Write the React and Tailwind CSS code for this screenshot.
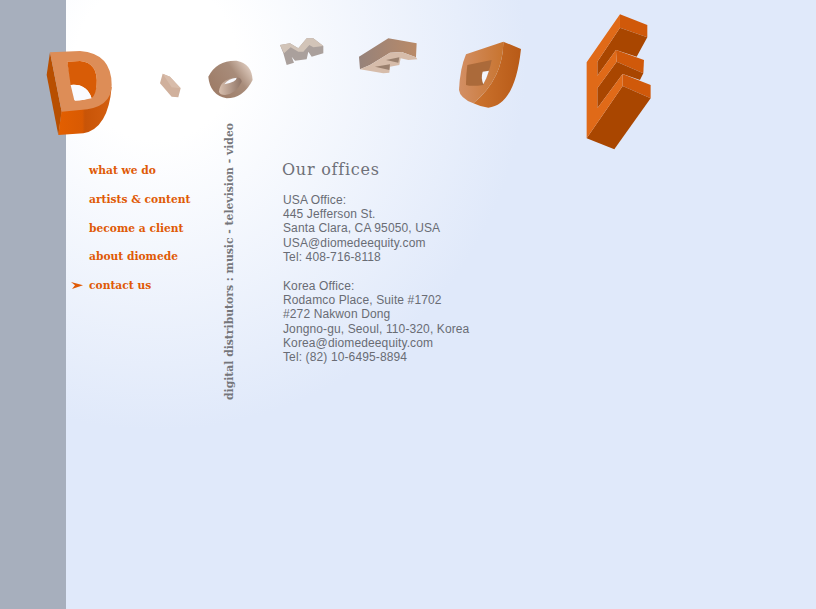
const NAV = ["what we do", "artists & content", "become a client", "about diomede", "contact us"];
const USA = ["USA Office:", "445 Jefferson St.", "Santa Clara, CA 95050, USA", "USA@diomedeequity.com", "Tel: 408-716-8118"];
const KOREA = ["Korea Office:", "Rodamco Place, Suite #1702", "#272 Nakwon Dong", "Jongno-gu, Seoul, 110-320, Korea", "Korea@diomedeequity.com", "Tel: (82) 10-6495-8894"];

function Logo() {
  return (
    <svg className="absolute left-0 top-0" width="816" height="160" viewBox="0 0 816 160">
      <defs>
        <linearGradient id="dBottom" x1="0" x2="1" y1="0" y2="0">
          <stop offset="0" stopColor="#e35f00" />
          <stop offset="0.45" stopColor="#d95a02" />
          <stop offset="0.5" stopColor="#c85407" />
          <stop offset="1" stopColor="#d45f10" />
        </linearGradient>
        <linearGradient id="oRing" x1="0" x2="1" y1="0.7" y2="0.1">
          <stop offset="0" stopColor="#9d7b66" />
          <stop offset="0.6" stopColor="#a88c7a" />
          <stop offset="1" stopColor="#ead9cd" />
        </linearGradient>
        <linearGradient id="oIn" x1="0" x2="1" y1="0" y2="0">
          <stop offset="0" stopColor="#d8bfae" />
          <stop offset="1" stopColor="#8f7466" />
        </linearGradient>
        <linearGradient id="eTop" x1="0" x2="1" y1="0" y2="0">
          <stop offset="0" stopColor="#96827a" />
          <stop offset="1" stopColor="#b98a68" />
        </linearGradient>
        <linearGradient id="d2Front" x1="0" x2="1" y1="0" y2="0">
          <stop offset="0" stopColor="#d38f64" />
          <stop offset="1" stopColor="#c8742f" />
        </linearGradient>
        <linearGradient id="d2Side" x1="0" x2="1" y1="0" y2="0">
          <stop offset="0" stopColor="#cc742f" />
          <stop offset="1" stopColor="#b85a17" />
        </linearGradient>
      </defs>

      <g transform="translate(30 30) scale(0.3333)">
        <path d="M60,67 L50,135 L85,315 L95,245 Z" fill="#b84f00" />
        <path d="M95,240 L85,315 L160,310 Q235,295 245,170 L150,238 Z" fill="url(#dBottom)" />
        <path fillRule="evenodd" d="M60,67 L150,63 Q245,70 245,165 Q245,235 150,240 L95,245 Z M112,95 L135,212 Q195,212 200,165 Q205,98 150,93 Z" fill="#dd8d57" />
        <path d="M112,95 L150,93 Q205,98 200,165 Q197,195 185,205 Q170,160 122,165 Z" fill="#d85c06" />
        <path d="M122,165 Q170,160 185,205 Q160,212 133,211 Z" fill="#fafbff" />
        <path d="M390,160 L398,131 L420,140 L452,175 L445,202 L425,200 Z" fill="#d0b09c" />
        <path d="M398,131 L420,140 L452,175 L425,172 Z" fill="#d8bcaa" />
        <path d="M535,140 Q560,90 620,92 Q665,100 668,150 Q640,205 590,205 Q540,195 535,140 Z" fill="url(#oRing)" />
        <path d="M567,185 Q570,150 615,142 Q635,142 635,155 Q620,190 585,195 Q570,195 567,185 Z" fill="url(#oIn)" />
        <path d="M583,163 Q595,145 620,143 Q620,155 583,163 Z" fill="#f8f9fe" />
      </g>

      <g transform="translate(270 10) scale(0.3333)">
        <path d="M30,105 L60,100 L85,115 L110,85 L130,85 L160,108 L160,130 L125,140 L115,125 L110,148 L75,152 L65,140 L72,158 L50,165 L40,130 Z" fill="#aaa09c" />
        <path d="M30,105 L60,100 L85,115 L110,85 L130,85 L160,108 L130,112 L118,105 L100,125 L85,125 L62,112 L42,130 Z" fill="#d2c4b8" />
        <path d="M267,140 L355,85 L440,100 L438,142 L395,126 L360,128 L300,165 L270,178 Z" fill="url(#eTop)" />
        <path d="M270,178 L300,165 L360,128 L395,126 L438,142 L442,148 L415,150 L392,145 L388,165 L360,170 L358,188 L340,190 Z" fill="#d6bcaa" />
        <path d="M348,150 L388,142 L385,158 Z M315,170 L360,163 L358,180 Z" fill="#9a806e" />
      </g>

      <g transform="translate(440 5) scale(0.3333)">
        <path d="M190,110 L243,132 Q225,300 145,308 Q120,305 100,295 Q190,220 190,110 Z" fill="url(#d2Side)" />
        <path d="M78,148 L190,110 Q190,220 100,295 Q60,280 57,255 Q60,190 78,148 Z" fill="url(#d2Front)" />
        <path d="M82,180 L155,165 Q150,195 130,240 Q95,245 78,240 Q78,210 82,180 Z" fill="#ab6a3a" />
        <path d="M128,200 L147,197 Q140,220 130,238 Q122,220 128,200 Z" fill="#f3f5fc" />

        <path d="M540,28 L622,60 L622,97 L540,68 Z" fill="#d0590a" />
        <path d="M472,170 L540,68 L622,97 L590,155 L528,135 L472,212 Z" fill="#a94600" />
        <path d="M528,135 L612,165 L610,205 L530,170 Z" fill="#d0590a" />
        <path d="M472,250 L530,170 L610,205 L600,225 L548,207 L472,310 Z" fill="#a94600" />
        <path d="M548,207 L632,240 L632,280 L548,243 Z" fill="#d0590a" />
        <path d="M440,400 L548,243 L632,280 L523,433 Z" fill="#a94600" />
        <path d="M540,28 L440,172 L440,400 L548,243 L548,207 L472,310 L472,250 L530,170 L528,135 L472,212 L472,170 L540,68 Z" fill="#e06a18" />
      </g>
    </svg>
  );
}

export default function App() {
  return (
    <div className="relative flex h-[609px] w-[816px] overflow-hidden bg-[#e0e9fa] font-['Liberation_Sans',sans-serif]">
      <div className="w-[66px] shrink-0 bg-[#a7afbd]" />
      <main className="flex flex-1 bg-[radial-gradient(circle_at_90px_60px,#ffffff_0px,#ffffff_80px,#e0e9fa_370px)] pt-[124px]">
        <nav className="ml-[5px] mt-[39px] flex w-[152px] shrink-0 flex-col gap-[13.8px] font-['DejaVu_Serif',serif] text-[10.7px] font-bold leading-[15px] text-[#e05a06]">
          {NAV.map((item, i) => (
            <a key={item} className="flex items-center">
              <span className="w-[18px] shrink-0">
                {i === 4 && (
                  <svg width="13" height="8" viewBox="0 0 13 8" className="block">
                    <path d="M0,0 L12,3.2 L1,7 L4,3.2 Z" fill="#e05a06" />
                  </svg>
                )}
              </span>
              <span className="whitespace-nowrap">{item}</span>
            </a>
          ))}
        </nav>
        <div className="h-[276px] w-[60px] shrink-0 rotate-180 whitespace-nowrap text-right font-['DejaVu_Serif',serif] text-[10.8px] font-bold leading-[14px] text-[#75767a] [writing-mode:vertical-rl]">
          digital distributors : music - television - video
        </div>
        <section className="mt-[35.5px] text-[12px] leading-[14.35px] tracking-[0.12px] text-[#696c74]">
          <h1 className="mb-[14px] ml-[-1px] font-['DejaVu_Serif',serif] text-[16px] font-normal leading-[19px] tracking-[0.75px] text-[#6e7078]">Our offices</h1>
          <div className="mb-[14.5px]">
            {USA.map((l) => <div key={l}>{l}</div>)}
          </div>
          <div>
            {KOREA.map((l) => <div key={l}>{l}</div>)}
          </div>
        </section>
      </main>
      <Logo />
    </div>
  );
}
